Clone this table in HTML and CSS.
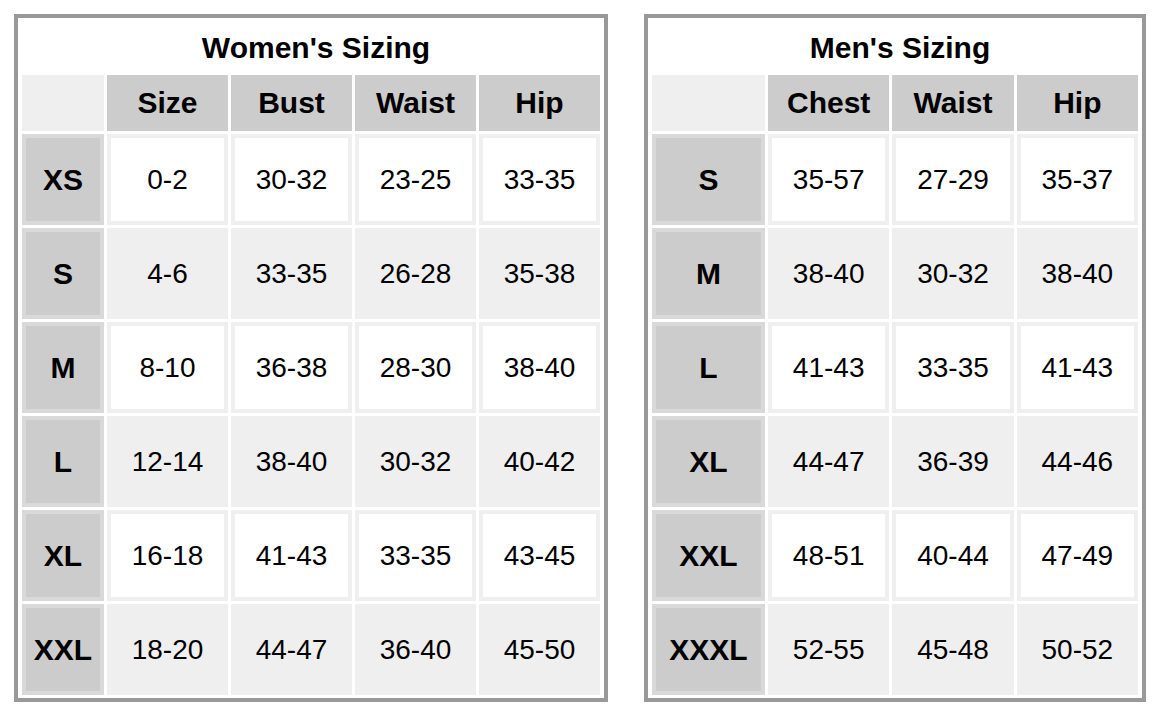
FILE: index.html
```html
<!DOCTYPE html>
<html lang="en">
<head>
<meta charset="utf-8">
<title>Sizing Charts</title>
<link rel="stylesheet" href="styles.css">
</head>
<body>
<section class="chart chart-women">
  <h2 class="title">Women's Sizing</h2>
  <div class="grid">
    <div class="corner"></div>
    <div class="head">Size</div>
    <div class="head">Bust</div>
    <div class="head">Waist</div>
    <div class="head">Hip</div>

    <div class="rh">XS</div>
    <div class="cell">0-2</div><div class="cell">30-32</div><div class="cell">23-25</div><div class="cell">33-35</div>

    <div class="rh">S</div>
    <div class="cell alt">4-6</div><div class="cell alt">33-35</div><div class="cell alt">26-28</div><div class="cell alt">35-38</div>

    <div class="rh">M</div>
    <div class="cell">8-10</div><div class="cell">36-38</div><div class="cell">28-30</div><div class="cell">38-40</div>

    <div class="rh">L</div>
    <div class="cell alt">12-14</div><div class="cell alt">38-40</div><div class="cell alt">30-32</div><div class="cell alt">40-42</div>

    <div class="rh">XL</div>
    <div class="cell">16-18</div><div class="cell">41-43</div><div class="cell">33-35</div><div class="cell">43-45</div>

    <div class="rh">XXL</div>
    <div class="cell alt">18-20</div><div class="cell alt">44-47</div><div class="cell alt">36-40</div><div class="cell alt">45-50</div>
  </div>
</section>

<section class="chart chart-men">
  <h2 class="title">Men's Sizing</h2>
  <div class="grid">
    <div class="corner"></div>
    <div class="head">Chest</div>
    <div class="head">Waist</div>
    <div class="head">Hip</div>

    <div class="rh">S</div>
    <div class="cell">35-57</div><div class="cell">27-29</div><div class="cell">35-37</div>

    <div class="rh">M</div>
    <div class="cell alt">38-40</div><div class="cell alt">30-32</div><div class="cell alt">38-40</div>

    <div class="rh">L</div>
    <div class="cell">41-43</div><div class="cell">33-35</div><div class="cell">41-43</div>

    <div class="rh">XL</div>
    <div class="cell alt">44-47</div><div class="cell alt">36-39</div><div class="cell alt">44-46</div>

    <div class="rh">XXL</div>
    <div class="cell">48-51</div><div class="cell">40-44</div><div class="cell">47-49</div>

    <div class="rh">XXXL</div>
    <div class="cell alt">52-55</div><div class="cell alt">45-48</div><div class="cell alt">50-52</div>
  </div>
</section>
</body>
</html>
```

FILE: styles.css
```css
* {
  box-sizing: border-box;
}

html, body {
  margin: 0;
  background: #ffffff;
}

body {
  display: flex;
  align-items: flex-start;
  gap: 36px;
  padding: 14px 0 0 14px;
  font-family: "Liberation Sans", Arial, sans-serif;
  color: #000000;
}

.chart {
  border: 4px solid #999999;
  background: #ffffff;
  padding: 0 4px 3px 4px;
}

.chart-women {
  width: 594px;
}

.chart-men {
  width: 502px;
}

.title {
  margin: 0;
  height: 57px;
  display: flex;
  align-items: center;
  justify-content: center;
  padding: 2px 0 0 10px;
  font-size: 30px;
  font-weight: bold;
  line-height: 1;
}

.grid {
  display: grid;
  column-gap: 3px;
  row-gap: 3px;
  grid-template-rows: 56px repeat(6, 91px);
}

.chart-women .grid {
  grid-template-columns: 82px repeat(4, 1fr);
}

.chart-men .grid {
  grid-template-columns: 113px repeat(3, 1fr);
}

.grid > div {
  display: flex;
  align-items: center;
  justify-content: center;
  line-height: 1;
}

.corner {
  background: #efefef;
}

.head {
  background: #cccccc;
  font-size: 30px;
  font-weight: bold;
}

.rh {
  background: #cccccc;
  border: 4px solid #d9d9d9;
  font-size: 30px;
  font-weight: bold;
}

.cell {
  background: #ffffff;
  border: 4px solid #efefef;
  font-size: 28px;
}

.cell.alt {
  background: #efefef;
}
```
